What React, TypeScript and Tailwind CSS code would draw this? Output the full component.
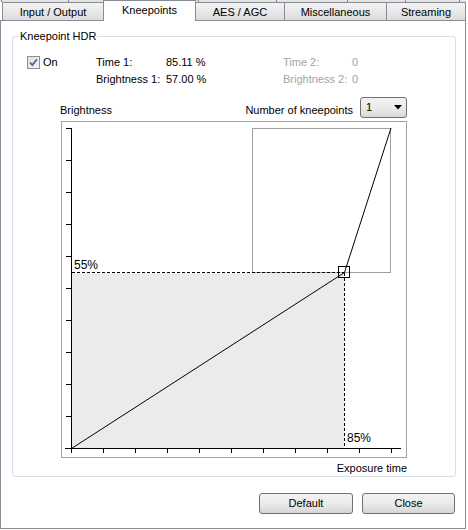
import React from "react";

const tabs = [
  { label: "Input / Output", w: "w-[102px]" },
  { label: "Kneepoints", w: "w-[93px]", selected: true },
  { label: "AES / AGC", w: "w-[90px]" },
  { label: "Miscellaneous", w: "w-[103px]" },
  { label: "Streaming", w: "w-[80px]" },
];

function Chart() {
  const yTicks = Array.from({ length: 10 }, (_, i) => 6 + 32 * i);
  const xTicks = Array.from({ length: 11 }, (_, i) => 9 + 32 * i);
  return (
    <svg width="344" height="335" viewBox="0 0 344 335" className="block">
      <rect x="10" y="151" width="272" height="175" fill="#ebebeb" />
      <rect x="190.5" y="6.5" width="138" height="144" fill="none" stroke="#a0a0a0" />
      <line x1="10" y1="150.5" x2="282" y2="150.5" stroke="#000" strokeDasharray="3 2" />
      <line x1="282.5" y1="151" x2="282.5" y2="326" stroke="#000" strokeDasharray="3 2" />
      <line x1="9.5" y1="6" x2="9.5" y2="327" stroke="#000" />
      <line x1="3" y1="326.5" x2="339" y2="326.5" stroke="#000" />
      {yTicks.map((y) => (
        <line key={y} x1="4" y1={y + 0.5} x2="9" y2={y + 0.5} stroke="#000" />
      ))}
      {xTicks.map((x) => (
        <line key={x} x1={x + 0.5} y1="326" x2={x + 0.5} y2="331" stroke="#000" />
      ))}
      <polyline
        points="9.5,326.5 282.5,150.5 329,6"
        fill="none"
        stroke="#000"
        strokeWidth="1"
      />
      <rect x="276.5" y="144.5" width="11" height="11" fill="none" stroke="#000" />
      <text x="12" y="147" fontSize="12" fontFamily="'Liberation Sans', Arial, sans-serif" fill="#000">
        55%
      </text>
      <text x="285" y="320" fontSize="12" fontFamily="'Liberation Sans', Arial, sans-serif" fill="#000">
        85%
      </text>
    </svg>
  );
}

function Btn({ label, w }: { label: string; w: string }) {
  return (
    <div
      className={`${w} h-[21px] flex items-center justify-center rounded-[3px] border border-[#707070] bg-gradient-to-b from-[#f2f2f2] via-[#ebebeb] to-[#d6d6d6] text-black`}
    >
      {label}
    </div>
  );
}

export default function App() {
  return (
    <div
      className="relative w-[468px] h-[530px] bg-white text-[11px] leading-[13px] text-black overflow-hidden"
      style={{ fontFamily: "'Liberation Sans', Arial, sans-serif" }}
    >
      {/* remnants of upper tab row */}
      <div className="absolute left-0 top-0 w-[466px] h-[2px] bg-[#e4e4e4] flex">
        <div className="w-[1px] h-full bg-[#898c95] ml-[1px]" />
        <div className="w-[1px] h-full bg-[#898c95] ml-[66px]" />
        <div className="w-[1px] h-full bg-[#898c95] ml-[129px]" />
        <div className="w-[1px] h-full bg-[#898c95] ml-[77px]" />
        <div className="w-[1px] h-full bg-[#898c95] ml-[70px]" />
        <div className="w-[1px] h-full bg-[#898c95] ml-[57px]" />
        <div className="w-[1px] h-full bg-[#898c95] ml-[53px]" />
      </div>

      {/* tab strip */}
      <div className="relative z-10 flex items-start h-[20px] pl-[2px]">
        {tabs.map((t, i) =>
          t.selected ? (
            <div
              key={t.label}
              className={`${t.w} -ml-px relative z-10 h-[21px] bg-white border border-b-0 border-[#898c95] flex justify-center pt-[3px]`}
            >
              {t.label}
            </div>
          ) : (
            <div
              key={t.label}
              className={`${t.w} ${i === 0 ? "" : "-ml-px"} mt-[2px] h-[18px] border border-b-0 border-[#898c95] bg-gradient-to-b from-[#f4f4f4] to-[#dcdcdc] flex justify-center pt-[3px]`}
            >
              {t.label}
            </div>
          )
        )}
      </div>

      {/* tab page */}
      <div className="w-[466px] h-[509px] border border-[#898c95] bg-white">
        {/* group box */}
        <div className="relative ml-[11px] mt-[15px] w-[444px] h-[441px] border border-[#d5dfe5] rounded-[3px]">
          <span className="absolute left-[6px] top-[-7px] px-[1px] bg-white">Kneepoint HDR</span>

          <div className="pt-[17px] pl-[14px]">
            <div className="grid grid-cols-[69px_70px_117px_69px_60px] leading-[17px]">
              <div className="flex items-center">
                <div className="w-[13px] h-[13px] border border-[#8e8f8f] bg-gradient-to-br from-[#dedede] to-[#f6f6f6] flex items-center justify-center">
                  <svg width="9" height="9" viewBox="0 0 9 9">
                    <path d="M1 4.5 L3.3 7 L8 1.2" fill="none" stroke="#4d5fa6" strokeWidth="1.8" />
                  </svg>
                </div>
                <span className="ml-[3px]">On</span>
              </div>
              <div>Time 1:</div>
              <div>85.11 %</div>
              <div className="text-[#a3a3a3]">Time 2:</div>
              <div className="text-[#a3a3a3]">0</div>

              <div />
              <div>Brightness 1:</div>
              <div>57.00 %</div>
              <div className="text-[#a3a3a3]">Brightness 2:</div>
              <div className="text-[#a3a3a3]">0</div>
            </div>
          </div>

          {/* chart header */}
          <div className="mt-[9px] ml-[47px] w-[347px] h-[21px] flex items-end">
            <span className="mb-[1px]">Brightness</span>
            <span className="ml-auto mb-[1px]">Number of kneepoints</span>
            <div className="ml-[7px] w-[47px] h-[21px] rounded-[3px] border border-[#707070] bg-gradient-to-b from-[#f2f2f2] via-[#ebebeb] to-[#d8d8d8] flex items-center pl-[5px] pr-[4px]">
              <span>1</span>
              <svg width="8" height="5" viewBox="0 0 8 5" className="ml-auto">
                <path d="M0 0 H8 L4 4.5 Z" fill="#000" />
              </svg>
            </div>
          </div>

          {/* chart frame */}
          <div className="ml-[48px] mt-[3px] w-[346px] flex flex-col">
            <div className="w-[346px] h-[337px] border border-[#a0a0a0] bg-white">
              <Chart />
            </div>
            <div className="mt-[4px] text-right">Exposure time</div>
          </div>
        </div>

        {/* buttons */}
        <div className="mt-[16px] pl-[258px] flex gap-[9px]">
          <Btn label="Default" w="w-[94px]" />
          <Btn label="Close" w="w-[93px]" />
        </div>
      </div>
    </div>
  );
}
